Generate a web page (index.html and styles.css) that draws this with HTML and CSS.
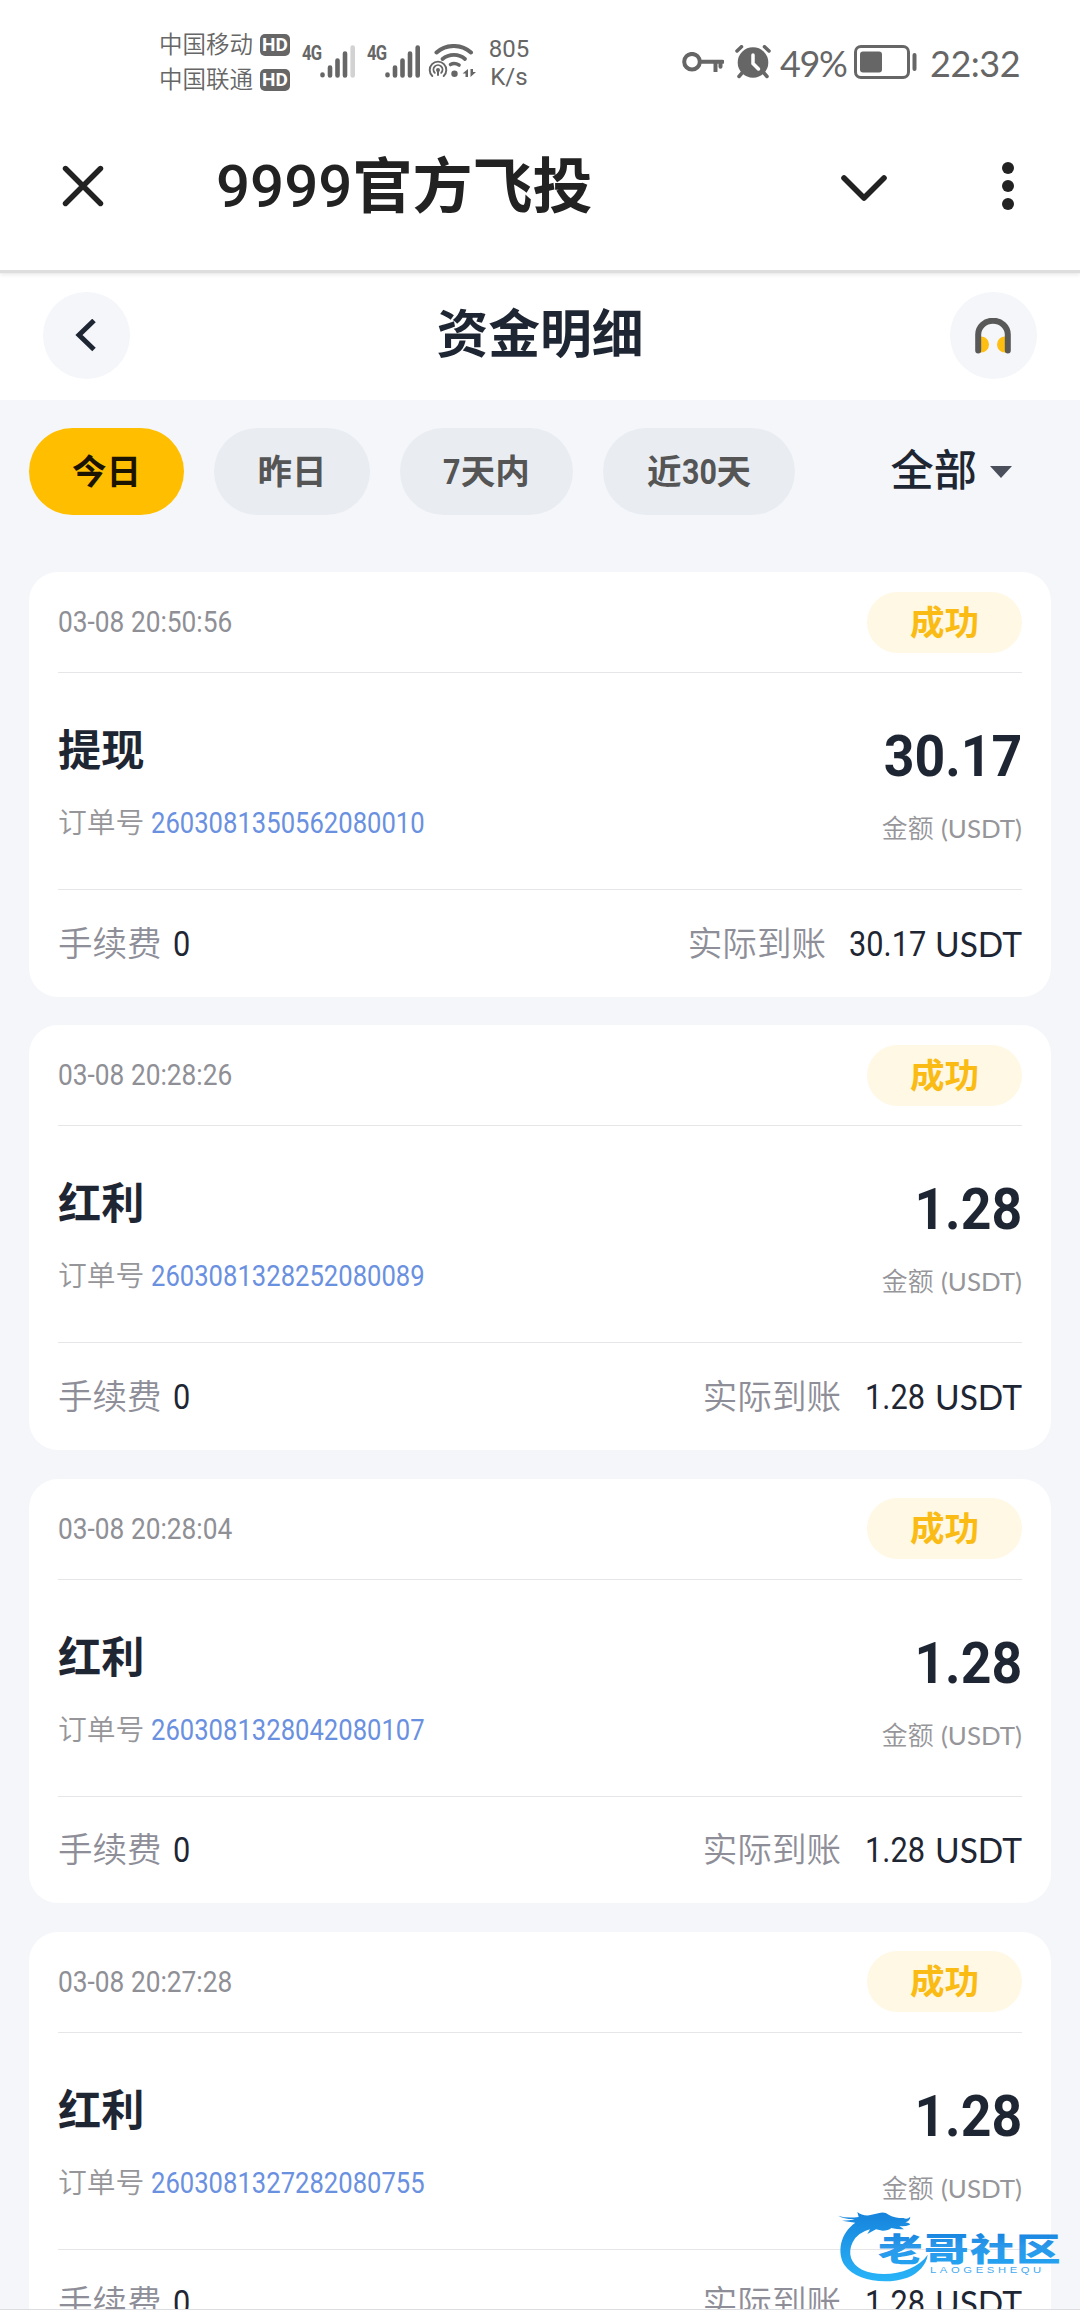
FILE: index.html
```
<!DOCTYPE html>
<html lang="zh-CN">
<head>
<meta charset="utf-8">
<title>资金明细</title>
<link rel="stylesheet" href="styles.css">
</head>
<body>
<div class="screen">
  <div class="status-bar">
    <div class="carriers">
      <div class="carrier">中国移动<span class="hd">HD</span></div>
      <div class="carrier">中国联通<span class="hd">HD</span></div>
    </div>
    <div class="signal">
      <span class="gen">4G</span>
      <svg width="36" height="34" viewBox="0 0 36 34" fill="none" stroke="#666" stroke-width="4.6" stroke-linecap="round"><path d="M2.5 30.5v.8M10 23.500v8M17.500 16.500v15M25 9.500v22"/><path d="M32.700 3.500v28" stroke="#d2d2d2"/></svg>
    </div>
    <div class="signal">
      <span class="gen">4G</span>
      <svg width="36" height="34" viewBox="0 0 36 34" fill="none" stroke="#666" stroke-width="4.6" stroke-linecap="round"><path d="M2.500 30.500v.8M10 23.500v8M17.500 16.500v15M25 9.500v22M32.700 3.500v28"/></svg>
    </div>
    <svg class="wifi" width="48" height="34" viewBox="0 0 48 34" fill="none" stroke="#666" stroke-linecap="round">
      <path d="M8.500 8.500C18-.2 33.500-.2 43 8.500" stroke-width="4"/>
      <path d="M14.500 15C21 9.500 31 9.500 37 15" stroke-width="3.800"/>
      <path d="M22.500 20.500q4-2.200 8.500.5" stroke-width="3.600"/>
      <circle cx="26.500" cy="29.800" r="3.200" fill="#666" stroke="none"/>
      <path d="M4.300 32A8.300 8.300 0 1 1 15.700 32M6.800 28.800A4.500 4.500 0 1 1 13.200 28.800" stroke-width="1.900"/>
      <circle cx="10" cy="26" r="2" fill="#666" stroke="none"/><path d="M10 26v5" stroke-width="2"/>
      <path d="M40 25v8h-2.500v-3.500H34.500zM42.500 25v8l5.500-5h-3v-3z" fill="#666" stroke="none"/>
    </svg>
    <div class="speed"><div>805</div><div>K/s</div></div>
    <div class="status-right">
      <svg width="42" height="20" viewBox="0 0 42 20" fill="none" stroke="#666" stroke-width="4"><circle cx="10" cy="9.700" r="7.800"/><path d="M18 9.700h22.500M33.500 9.700v9.500M38.500 9.700v5" stroke-linecap="round"/></svg>
      <svg class="alarm" width="36" height="34" viewBox="0 0 36 34" fill="none" stroke="#666" stroke-linecap="round"><circle cx="18" cy="17.500" r="15.300" fill="#666" stroke="none"/><path d="M2 6l4.500-4.300M34 6l-4.500-4.300M7 28l-3 3.500M29 28l3 3.500" stroke-width="3.500"/><path d="M18 10v8.500l5.500 5.500" stroke="#fff" stroke-width="3.500"/></svg>
      <span class="percent">49%</span>
      <svg class="battery" width="64" height="34" viewBox="0 0 64 34"><rect x="1.500" y="1.500" width="53" height="31" rx="5.500" fill="none" stroke="#666" stroke-width="3"/><rect x="6" y="6.500" width="22" height="21" rx="3" fill="#666"/><rect x="58.500" y="8" width="4" height="18" rx="2" fill="#666"/></svg>
      <span class="clock">22:32</span>
    </div>
  </div>

  <div class="app-bar">
    <svg class="close" width="42" height="42" viewBox="0 0 42 42" stroke="#222" stroke-width="5.400" stroke-linecap="round"><path d="M3.500 3.500l35 35M38.500 3.500l-35 35"/></svg>
    <h1 class="app-title">9999<b>官方飞投</b></h1>
    <svg class="chevron" width="48" height="28" viewBox="0 0 48 28" fill="none" stroke="#222" stroke-width="5.600" stroke-linecap="round" stroke-linejoin="round"><path d="M4 4l20 20L44 4"/></svg>
    <svg width="12" height="48" viewBox="0 0 12 48" fill="#222"><circle cx="6" cy="6" r="6"/><circle cx="6" cy="24" r="6"/><circle cx="6" cy="42" r="6"/></svg>
  </div>

  <div class="page-head">
    <div class="round-btn"><svg width="24" height="34" viewBox="0 0 24 34" fill="none" stroke="#1f2633" stroke-width="5"><path d="M19 1.500L4 16 19 30.500"/></svg></div>
    <h2 class="page-title">资金明细</h2>
    <div class="round-btn"><svg width="36" height="36" viewBox="0 0 36 36" fill="none"><path d="M4 18.500h2a8 8 0 0 1 0 16H4zM32 18.500h-2a8 8 0 0 0 0 16h2z" fill="#ffbe12"/><path d="M3.200 32.500V16.500a14.800 13.800 0 0 1 29.600 0v16" stroke="#595959" stroke-width="6" stroke-linecap="round"/></svg></div>
  </div>

  <div class="filters">
    <div class="chip active">今日</div>
    <div class="chip">昨日</div>
    <div class="chip"><span class="din">7</span>天内</div>
    <div class="chip">近<span class="din two">30</span>天</div>
    <div class="kind">全部<i class="caret"></i></div>
  </div>

  <div class="list">
    <div class="card">
      <div class="card-head"><span class="date">03-08 20:50:56</span><span class="state">成功</span></div>
      <div class="card-body">
        <div><div class="type">提现</div><div class="order">订单号<span class="order-no">2603081350562080010</span></div></div>
        <div class="right"><div class="amount">30.17</div><div class="unit">金额 <span>(USDT)</span></div></div>
      </div>
      <div class="card-foot"><div>手续费<span class="fee">0</span></div><div>实际到账<span class="net wide">30.17</span><span class="cur">USDT</span></div></div>
    </div>
    <div class="card">
      <div class="card-head"><span class="date">03-08 20:28:26</span><span class="state">成功</span></div>
      <div class="card-body">
        <div><div class="type">红利</div><div class="order">订单号<span class="order-no">2603081328252080089</span></div></div>
        <div class="right"><div class="amount">1.28</div><div class="unit">金额 <span>(USDT)</span></div></div>
      </div>
      <div class="card-foot"><div>手续费<span class="fee">0</span></div><div>实际到账<span class="net">1.28</span><span class="cur">USDT</span></div></div>
    </div>
    <div class="card">
      <div class="card-head"><span class="date">03-08 20:28:04</span><span class="state">成功</span></div>
      <div class="card-body">
        <div><div class="type">红利</div><div class="order">订单号<span class="order-no">2603081328042080107</span></div></div>
        <div class="right"><div class="amount">1.28</div><div class="unit">金额 <span>(USDT)</span></div></div>
      </div>
      <div class="card-foot"><div>手续费<span class="fee">0</span></div><div>实际到账<span class="net">1.28</span><span class="cur">USDT</span></div></div>
    </div>
    <div class="card">
      <div class="card-head"><span class="date">03-08 20:27:28</span><span class="state">成功</span></div>
      <div class="card-body">
        <div><div class="type">红利</div><div class="order">订单号<span class="order-no">2603081327282080755</span></div></div>
        <div class="right"><div class="amount">1.28</div><div class="unit">金额 <span>(USDT)</span></div></div>
      </div>
      <div class="card-foot"><div>手续费<span class="fee">0</span></div><div>实际到账<span class="net">1.28</span><span class="cur">USDT</span></div></div>
    </div>
  </div>

  <svg class="watermark" width="260" height="120" viewBox="0 0 780 360">
    <defs>
      <linearGradient id="sea" x1="0" y1="0" x2="0" y2="1"><stop offset="0" stop-color="#1683dc"/><stop offset="1" stop-color="#29b4f8"/></linearGradient>
      <linearGradient id="ink" x1="0" y1="0" x2="0" y2="1"><stop offset=".1" stop-color="#1180dd"/><stop offset=".5" stop-color="#2b98ea"/><stop offset="1" stop-color="#1fa5f2"/></linearGradient>
    </defs>
    <path fill="url(#sea)" d="M54 77Q80 86 116 81L112 66Q126 78 148 76L182 68Q196 66 206 74Q222 84 250 84Q262 90 271 80Q270 93 256 97Q270 99 270 104Q255 110 238 108L252 118Q228 118 214 114Q205 122 188 122L168 118L142 132L150 118Q112 128 98 157C82 190 92 222 126 239C190 267 286 248 323 194C320 222 296 250 262 263C196 286 106 272 74 226C50 188 60 130 106 98L66 92Q90 92 104 87Q74 88 54 77Z"/>
    <text class="wm-name" transform="translate(174 213) scale(1.38 1)" fill="url(#ink)" textLength="397" lengthAdjust="spacing">老哥社区</text>
    <text class="wm-latin" transform="translate(330 249) scale(1.25 1)" textLength="267" lengthAdjust="spacing">LAOGESHEQU</text>
  </svg>
  <div class="bottom-line"></div>
</div>
</body>
</html>
```
FILE: styles.css
```
* { box-sizing: border-box; }
body {
  margin: 0;
  font-family: Roboto, "Noto Sans CJK SC", sans-serif;
  background: #f4f6fa;
}
svg { display: block; flex: none; }
.screen {
  position: relative;
  width: 1080px;
  height: 2310px;
  overflow: hidden;
  background: #f4f6fa;
}

/* system status bar */
.status-bar {
  display: flex;
  align-items: flex-start;
  height: 120px;
  padding: 27px 61px 0 159px;
  background: #fff;
  color: #666;
}
.carriers { width: 143px; font-size: 23.5px; line-height: 35px; font-weight: 350; }
.carrier { display: flex; align-items: center; height: 35px; padding-top: 2px; white-space: nowrap; }
.hd {
  margin: -2px 0 0 7px;
  width: 30px;
  height: 22px;
  border-radius: 5px;
  background: #666;
  color: #fff;
  font-size: 19px;
  font-weight: 700;
  line-height: 22px;
  text-align: center;
}
.signal { display: flex; width: 65px; padding-top: 17px; }
.gen {
  width: 18px;
  font-size: 20px;
  line-height: 19px;
  font-weight: 700;
  letter-spacing: -1px;
  white-space: nowrap;
  transform: scaleX(.83);
  transform-origin: left;
}
.wifi { margin: 17px 0 0 -4px; }
.speed { width: 60px; margin-left: 3px; padding-top: 8px; font-size: 24px; line-height: 28px; text-align: center; }
.status-right {
  display: flex;
  align-items: center;
  height: 34px;
  margin: 18px 0 0 auto;
  font-family: Lato, sans-serif;
  font-size: 36px;
  line-height: 34px;
}
.alarm { margin-left: 11px; }
.percent { width: 68px; margin: 2px 0 0 9px; letter-spacing: -1.4px; }
.battery { margin-left: 6px; }
.clock { width: 89px; margin: 2px 0 0 12px; letter-spacing: -.5px; }

/* browser bar */
.app-bar {
  position: relative;
  z-index: 1;
  display: flex;
  align-items: center;
  height: 150px;
  padding: 0 66px 18px 62px;
  background: #fff;
  box-shadow: 0 3px 1px #dedede, 0 5px 4px rgba(0, 0, 0, .08);
}
.app-title {
  flex: 1;
  margin: 1px 0 0 112px;
  color: #222;
  font-size: 60px;
  line-height: 90px;
  font-weight: 500;
}
.app-title b { position: relative; top: 1px; font-weight: 700; }
.chevron { margin: 3px 114px 0 0; }

/* page header */
.page-head {
  display: flex;
  justify-content: space-between;
  align-items: flex-start;
  height: 130px;
  padding: 22px 43px 0;
  background: #fff;
}
.round-btn {
  display: flex;
  align-items: center;
  justify-content: center;
  width: 87px;
  height: 87px;
  border-radius: 50%;
  background: #f4f6fa;
}
.page-title {
  margin: 0;
  color: #1f2633;
  font-size: 51.8px;
  line-height: 88px;
  font-weight: 700;
}

/* filters */
.filters {
  display: flex;
  align-items: center;
  gap: 30px;
  height: 172px;
  padding: 0 68px 29px 29px;
}
.chip {
  display: flex;
  justify-content: center;
  width: 156px;
  height: 87px;
  border-radius: 44px;
  background: #e9edf2;
  color: #555;
  font-size: 34.56px;
  line-height: 88px;
  font-weight: 700;
}
.chip:nth-child(3) { width: 173px; }
.chip:nth-child(4) { width: 192px; }
.chip.active { width: 155px; background: #ffbf00; color: #1a1400; }
.din { display: inline-block; width: 17.5px; transform: scaleX(.88); transform-origin: left; }
.din.two { width: 35px; }
.kind {
  display: flex;
  align-items: center;
  margin-left: auto;
  color: #1f2633;
  font-size: 43.2px;
  line-height: 89px;
  font-weight: 500;
}
.caret {
  margin-left: 13px;
  border: 11px solid transparent;
  border-top: 12px solid #4a4f5b;
  border-bottom: 0;
}

/* records */
.list { display: flex; flex-direction: column; gap: 28.83px; padding: 0 29px; }
.card { flex: none; height: 424.5px; padding: 0 29px; border-radius: 29px; background: #fff; }
.card-head {
  display: flex;
  align-items: center;
  justify-content: space-between;
  height: 101px;
  border-bottom: 1px solid #e6e6e8;
}
.date {
  color: #8f8f96;
  font-size: 28.8px;
  white-space: nowrap;
  transform: scaleX(.913);
  transform-origin: left;
}
.state {
  width: 155px;
  height: 61px;
  border-radius: 31px;
  background: #fff8e5;
  color: #fabc14;
  font-size: 34.56px;
  line-height: 63px;
  font-weight: 700;
  text-align: center;
}
.card-body {
  display: flex;
  justify-content: space-between;
  height: 217px;
  border-bottom: 1px solid #e6e6e8;
}
.type { padding-top: 47px; color: #1f2633; font-size: 43.2px; line-height: 64px; font-weight: 700; }
.order { display: flex; margin-top: 17px; color: #96969a; font-size: 28.8px; line-height: 44px; font-weight: 350; }
.order-no {
  margin-left: 7px;
  color: #6a90e0;
  font-weight: 400;
  transform: scaleX(.89);
  transform-origin: left;
}
.right { text-align: right; }
.amount {
  padding-top: 51px;
  color: #1f2633;
  font-size: 57px;
  line-height: 66px;
  font-weight: 700;
  transform: scaleX(.94);
  transform-origin: right;
}
.unit {
  margin-top: 20px;
  color: #96969a;
  font-size: 25.9px;
  line-height: 36px;
  font-weight: 350;
  word-spacing: 1px;
}
.unit span { font-family: Lato, sans-serif; font-weight: 400; }
.card-foot {
  display: flex;
  align-items: center;
  justify-content: space-between;
  height: 106px;
  padding-top: 1px;
  color: #8e8e98;
  font-size: 34.56px;
  font-weight: 350;
}
.card-foot > div { display: flex; align-items: center; line-height: 50px; }
.fee, .net, .cur { color: #1f2633; font-weight: 400; }
.fee { margin-left: 11px; transform: scaleX(.89); transform-origin: left; }
.net { width: 61px; margin-left: 24px; transform: scaleX(.89); transform-origin: left; white-space: nowrap; }
.net.wide { width: 77px; margin-left: 23px; }
.cur { width: 87px; margin-left: 9px; font-family: Lato, sans-serif; transform: scaleX(.97); transform-origin: left; }

.watermark { position: absolute; left: 820px; top: 2190px; }
.wm-name { font-family: "Noto Sans CJK SC", sans-serif; font-size: 97px; font-weight: 900; }
.wm-latin { font-family: "Liberation Sans", sans-serif; font-size: 27px; fill: #46aaf0; }
.bottom-line { position: absolute; left: 0; right: 0; bottom: 0; height: 1px; background: #dcdde0; }
```
